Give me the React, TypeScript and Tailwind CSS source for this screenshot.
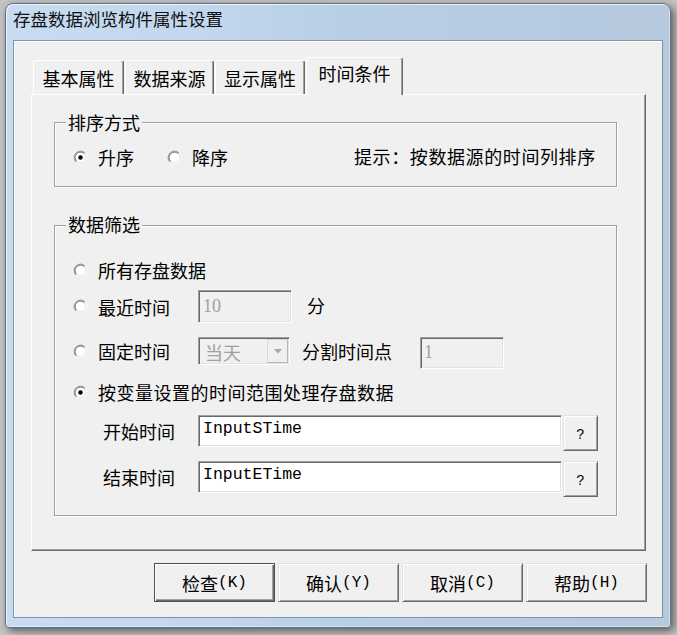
import React from "react";

function Radio({ checked }: { checked?: boolean }) {
  return (
    <svg width="15" height="15" viewBox="0 0 15 15" className="shrink-0">
      <circle cx="7.5" cy="7.5" r="5" fill="#ffffff" />
      <path d="M2.904 12.096A6.5 6.5 0 0 1 12.096 2.904" stroke="#a0a0a0" fill="none" />
      <path d="M12.096 2.904A6.5 6.5 0 0 1 2.904 12.096" stroke="#ffffff" fill="none" />
      <path d="M3.611 11.389A5.5 5.5 0 0 1 11.389 3.611" stroke="#696969" fill="none" />
      <path d="M11.389 3.611A5.5 5.5 0 0 1 3.611 11.389" stroke="#e3e3e3" fill="none" />
      {checked && <circle cx="7.5" cy="7.5" r="2.2" fill="#000000" />}
    </svg>
  );
}

const sunken =
  "border border-t-[#a0a0a0] border-l-[#a0a0a0] border-r-white border-b-white shadow-[inset_1px_1px_0_#696969,inset_-1px_-1px_0_#e3e3e3]";
const raised =
  "border border-t-[#e3e3e3] border-l-[#e3e3e3] border-r-[#696969] border-b-[#696969] shadow-[inset_1px_1px_0_#ffffff,inset_-1px_-1px_0_#a0a0a0] bg-[#f0f0f0]";

function Tab({ label, active, w }: { label: string; active?: boolean; w: string }) {
  if (active) {
    return (
      <div
        className={`${w} h-[38px] -mb-[1px] relative z-10 ml-[1px] bg-[#f0f0f0] rounded-t-[3px] border-t border-l border-t-white border-l-white border-r border-r-[#696969] shadow-[inset_-1px_0_0_#a0a0a0] flex justify-center pt-[3px] text-[18px] leading-[24px]`}
      >
        {label}
      </div>
    );
  }
  return (
    <div
      className={`${w} h-[34px] bg-[#f0f0f0] rounded-t-[3px] border-t border-l border-t-white border-l-white border-r border-r-[#696969] shadow-[inset_-1px_0_0_#a0a0a0] flex items-center justify-center text-[18px] leading-[24px]`}
    >
      {label}
    </div>
  );
}

function DlgButton({ cn, en, isDefault }: { cn: string; en: string; isDefault?: boolean }) {
  return (
    <div
      className={
        isDefault
          ? "w-[121px] h-[39px] border border-[#4f4f4f] bg-[#f0f0f0] shadow-[inset_1px_1px_0_#ffffff,inset_-1px_-1px_0_#696969,inset_-2px_-2px_0_#a0a0a0] flex items-center justify-center"
          : `w-[121px] h-[39px] ${raised} flex items-center justify-center`
      }
    >
      <span className="text-[18px] leading-[24px]">{cn}</span>
      <span className="font-['Liberation_Mono',monospace] text-[16px] leading-[24px]">{en}</span>
    </div>
  );
}

export default function App() {
  return (
    <div className="w-[677px] h-[635px] overflow-hidden bg-[#c4c4c4] pt-[3px] pl-[5px] font-['Noto_Sans_CJK_SC',sans-serif] text-black">
      <div className="w-[666px] h-[625px] rounded-t-[8px] rounded-b-[4px] border border-[#5f7185] bg-[linear-gradient(90deg,#c8dcf1_0%,#c2d7ed_30%,#b9cfe6_50%,#b6c9dd_100%)] shadow-[inset_1px_1px_0_rgba(255,255,255,0.75),inset_-1px_-1px_0_rgba(255,255,255,0.45),3px_3px_8px_rgba(0,0,0,0.55)] flex flex-col px-[7px]">
        {/* title */}
        <div className="h-[36px] text-[17.5px] leading-[30px] text-[#101010] whitespace-nowrap">
          存盘数据浏览构件属性设置
        </div>

        {/* client */}
        <div className="w-[650px] h-[578px] border border-[#7f92a6] bg-[#f0f0f0] shadow-[inset_1px_1px_0_#ffffff] pt-[16px] pl-[17px] flex flex-col">
          {/* tabs */}
          <div className="h-[37px] flex items-end pl-[2px]">
            <Tab label="基本属性" w="w-[91px]" />
            <div className="ml-[1px]">
              <Tab label="数据来源" w="w-[89px]" />
            </div>
            <div className="ml-[1px]">
              <Tab label="显示属性" w="w-[90px]" />
            </div>
            <Tab label="时间条件" w="w-[97px]" active />
          </div>

          {/* panel */}
          <div className="w-[615px] h-[457px] border border-t-white border-l-white border-r-[#696969] border-b-[#696969] shadow-[inset_-1px_-1px_0_#a0a0a0] pl-[22px] pt-[27px]">
            {/* group 1 */}
            <div className="relative w-[563px] h-[65px] border border-[#a0a0a0] shadow-[inset_1px_1px_0_#ffffff,1px_1px_0_#ffffff] pl-[18px]">
              <span className="absolute left-[11px] top-[-12px] px-[2px] bg-[#f0f0f0] text-[18px] leading-[22px]">
                排序方式
              </span>
              <div className="mt-[22px] h-[24px] flex items-center text-[18px] leading-[24px]">
                <Radio checked />
                <span className="ml-[10px]">升序</span>
                <span className="ml-[33px] flex">
                  <Radio />
                </span>
                <span className="ml-[10px]">降序</span>
                <span className="ml-[126px] -mt-[3px] tracking-[0.6px] whitespace-nowrap">
                  提示：按数据源的时间列排序
                </span>
              </div>
            </div>

            {/* group 2 */}
            <div className="relative mt-[38px] w-[563px] h-[291px] border border-[#a0a0a0] shadow-[inset_1px_1px_0_#ffffff,1px_1px_0_#ffffff] pl-[18px] flex flex-col text-[18px] leading-[24px]">
              <span className="absolute left-[11px] top-[-13px] px-[2px] bg-[#f0f0f0] leading-[22px]">
                数据筛选
              </span>

              <div className="mt-[32px] h-[24px] flex items-center">
                <Radio />
                <span className="ml-[10px]">所有存盘数据</span>
              </div>

              <div className="mt-[8px] h-[33px] flex items-center">
                <Radio />
                <span className="ml-[10px] w-[100px]">最近时间</span>
                <div className={`w-[94px] h-[33px] ${sunken} bg-[#f0f0f0] pl-[4px] font-['Liberation_Serif',serif] text-[18px] leading-[30px] text-[#a0a0a0]`}>
                  10
                </div>
                <span className="ml-[15px] -mt-[4px]">分</span>
              </div>

              <div className="mt-[14px] h-[28px] flex items-center">
                <Radio />
                <span className="ml-[10px] w-[100px]">固定时间</span>
                <div className={`w-[92px] h-[28px] ${sunken} bg-[#f0f0f0] flex p-[1px]`}>
                  <span className="pl-[5px] text-[#a0a0a0] leading-[26px]">当天</span>
                  <div className="ml-auto w-[21px] h-full border border-[#d8d8d8] border-r-[#b5b5b5] border-b-[#b5b5b5] bg-[#f0f0f0] flex items-center justify-center">
                    <svg width="8" height="5" viewBox="0 0 8 5">
                      <polygon points="0,0 8,0 4,4.5" fill="#a7a7a7" />
                    </svg>
                  </div>
                </div>
                <span className="ml-[12px] whitespace-nowrap">分割时间点</span>
                <div className={`ml-[28px] self-start w-[84px] h-[32px] ${sunken} bg-[#f0f0f0] pl-[3px] font-['Liberation_Serif',serif] text-[18px] leading-[28px] text-[#a0a0a0]`}>
                  1
                </div>
              </div>

              <div className="mt-[15px] h-[24px] flex items-center">
                <Radio checked />
                <span className="ml-[10px] tracking-[0.5px] whitespace-nowrap">按变量设置的时间范围处理存盘数据</span>
              </div>

              <div className="mt-[11px] h-[36px] flex items-start pl-[30px]">
                <span className="w-[95px] leading-[32px]">开始时间</span>
                <div className={`w-[364px] h-[32px] ${sunken} bg-white pl-[4px] font-['Liberation_Mono',monospace] text-[16.5px] leading-[26px]`}>
                  InputSTime
                </div>
                <div className={`ml-[1px] w-[35px] h-[36px] ${raised} flex items-center justify-center pt-[3px] font-['Liberation_Mono',monospace] text-[14px] leading-[16px]`}>
                  ?
                </div>
              </div>

              <div className="mt-[10px] h-[36px] flex items-start pl-[30px]">
                <span className="w-[95px] leading-[32px]">结束时间</span>
                <div className={`w-[364px] h-[32px] ${sunken} bg-white pl-[4px] font-['Liberation_Mono',monospace] text-[16.5px] leading-[26px]`}>
                  InputETime
                </div>
                <div className={`ml-[1px] w-[35px] h-[36px] ${raised} flex items-center justify-center pt-[3px] font-['Liberation_Mono',monospace] text-[14px] leading-[16px]`}>
                  ?
                </div>
              </div>
            </div>
          </div>

          {/* buttons */}
          <div className="mt-[12px] flex justify-end pr-[15px] gap-[3px]">
            <DlgButton cn="检查" en="(K)" isDefault />
            <DlgButton cn="确认" en="(Y)" />
            <DlgButton cn="取消" en="(C)" />
            <DlgButton cn="帮助" en="(H)" />
          </div>
        </div>
      </div>
    </div>
  );
}
